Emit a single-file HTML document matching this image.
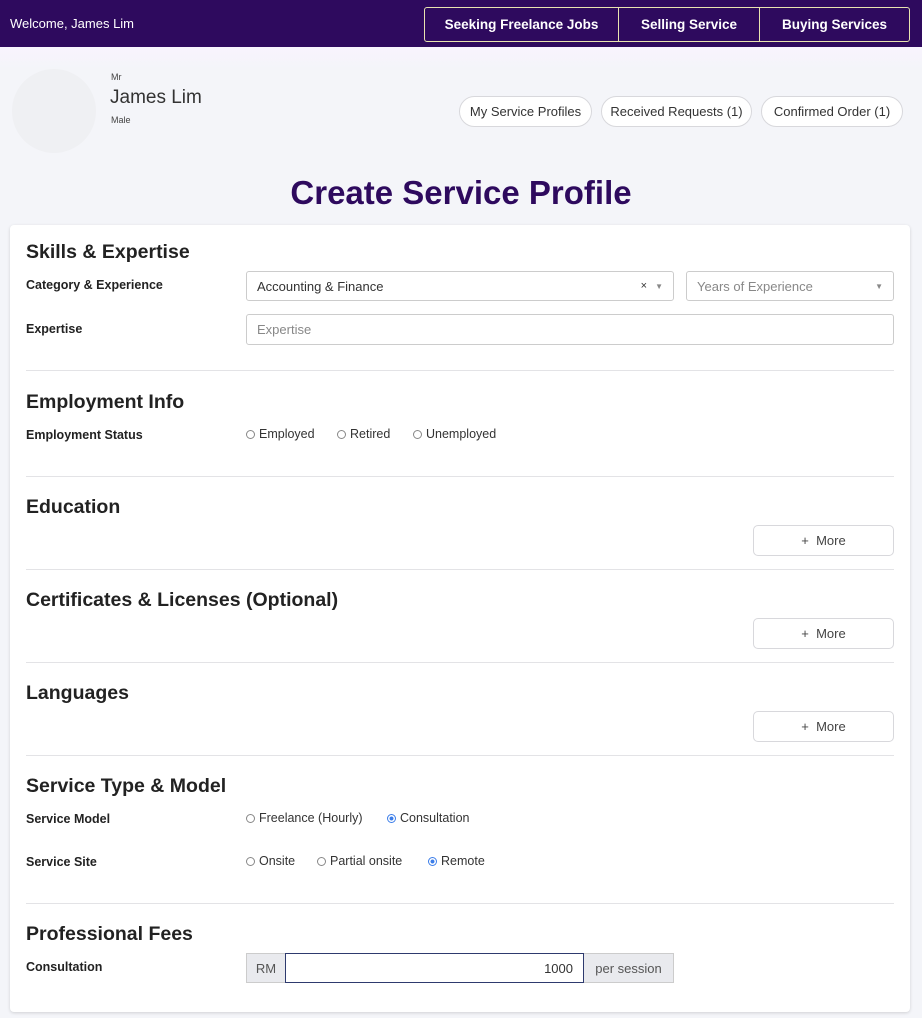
<!DOCTYPE html>
<html><head><meta charset="utf-8"><style>
*{box-sizing:border-box;margin:0;padding:0}
body{width:922px;height:1018px;background:#f4f5f9;font-family:"Liberation Sans",sans-serif;color:#222;position:relative;overflow:hidden;font-size:13px}
.a{position:absolute}
.hdr{left:0;top:0;width:922px;height:47px;background:#2e0a5e}
.band{left:0;top:47px;width:922px;height:22px;background:linear-gradient(#f8f4fe,#f4f5f9)}
.nav{left:424px;top:7px;width:486px;height:35px;border:1px solid #e8e3b0;border-radius:3px;display:flex;color:#fff;font-weight:bold;font-size:13.5px}
.nav div{display:flex;align-items:center;justify-content:center;border-right:1px solid #e8e3b0}
.nav div:last-child{border-right:none}
.pill{top:96px;height:31px;border:1px solid #d8d8dc;border-radius:16px;background:#fff;display:flex;align-items:center;justify-content:center;font-size:13px;color:#333}
.card{left:10px;top:225px;width:900px;height:787px;background:#fff;border-radius:4px;box-shadow:0 1px 3px rgba(0,0,0,.15)}
h2{position:absolute;left:26px;font-size:19.5px;font-weight:bold;color:#222}
.lbl{position:absolute;left:26px;font-size:12.5px;font-weight:bold;color:#222}
.hr{position:absolute;left:26px;width:868px;height:1px;background:#e3e3e6}
.inp{position:absolute;border:1px solid #ccc;border-radius:3px;background:#fff;font-size:13px;padding-left:10px;display:flex;align-items:center}
.more{position:absolute;left:753px;width:141px;height:31px;border:1px solid #d8d8dc;border-radius:5px;display:flex;align-items:center;justify-content:center;font-size:13px;color:#444}
.r{position:absolute;font-size:12.5px;color:#333;display:flex;align-items:center}
.r i{display:inline-block;width:9px;height:9px;border:1px solid #888;border-radius:50%;margin-right:4px}
.r i.on{border:1px solid #3b7de9;background:radial-gradient(#3b7de9 35%,#fff 45%)}
</style></head><body>
<div class="a hdr"></div>
<div class="a" style="left:10px;top:16px;color:#fff;font-size:13px">Welcome, James Lim</div>
<div class="a nav"><div style="width:194px">Seeking Freelance Jobs</div><div style="width:141px">Selling Service</div><div style="flex:1">Buying Services</div></div>
<div class="a band"></div>
<div class="a" style="left:12px;top:69px;width:84px;height:84px;border-radius:50%;background:#eff0f3"></div>
<div class="a" style="left:111px;top:72px;font-size:9px;color:#444">Mr</div>
<div class="a" style="left:110px;top:87px;font-size:19px;color:#333">James Lim</div>
<div class="a" style="left:111px;top:115px;font-size:9px;color:#444">Male</div>
<div class="a pill" style="left:459px;width:133px">My Service Profiles</div>
<div class="a pill" style="left:601px;width:151px">Received Requests (1)</div>
<div class="a pill" style="left:761px;width:142px">Confirmed Order (1)</div>
<div class="a" style="left:0;width:922px;top:174px;text-align:center;font-size:33px;font-weight:bold;color:#2e0a5e">Create Service Profile</div>
<div class="a card"></div>
<h2 style="top:241px">Skills &amp; Expertise</h2>
<div class="lbl" style="top:278px">Category &amp; Experience</div>
<div class="inp" style="left:246px;top:271px;width:428px;height:30px;color:#333">Accounting &amp; Finance<span style="position:absolute;right:26px;font-size:11px">×</span><span style="position:absolute;right:10px;font-size:8px;color:#888">▼</span></div>
<div class="inp" style="left:686px;top:271px;width:208px;height:30px;color:#888">Years of Experience<span style="position:absolute;right:10px;font-size:8px;color:#888">▼</span></div>
<div class="lbl" style="top:322px">Expertise</div>
<div class="inp" style="left:246px;top:314px;width:648px;height:31px;color:#888">Expertise</div>
<div class="hr" style="top:370px"></div>
<h2 style="top:391px">Employment Info</h2>
<div class="lbl" style="top:428px">Employment Status</div>
<div class="r" style="left:246px;top:427px"><i></i>Employed</div>
<div class="r" style="left:337px;top:427px"><i></i>Retired</div>
<div class="r" style="left:413px;top:427px"><i></i>Unemployed</div>
<div class="hr" style="top:476px"></div>
<h2 style="top:496px">Education</h2>
<div class="more" style="top:525px">+&nbsp; More</div>
<div class="hr" style="top:569px"></div>
<h2 style="top:589px">Certificates &amp; Licenses (Optional)</h2>
<div class="more" style="top:618px">+&nbsp; More</div>
<div class="hr" style="top:662px"></div>
<h2 style="top:682px">Languages</h2>
<div class="more" style="top:711px">+&nbsp; More</div>
<div class="hr" style="top:755px"></div>
<h2 style="top:775px">Service Type &amp; Model</h2>
<div class="lbl" style="top:812px">Service Model</div>
<div class="r" style="left:246px;top:811px"><i></i>Freelance (Hourly)</div>
<div class="r" style="left:387px;top:811px"><i class="on"></i>Consultation</div>
<div class="lbl" style="top:855px">Service Site</div>
<div class="r" style="left:246px;top:854px"><i></i>Onsite</div>
<div class="r" style="left:317px;top:854px"><i></i>Partial onsite</div>
<div class="r" style="left:428px;top:854px"><i class="on"></i>Remote</div>
<div class="hr" style="top:903px"></div>
<h2 style="top:923px">Professional Fees</h2>
<div class="lbl" style="top:960px">Consultation</div>
<div class="a" style="left:246px;top:953px;width:40px;height:30px;background:#e9eaee;border:1px solid #ccc;display:flex;align-items:center;justify-content:center;color:#555">RM</div>
<div class="a" style="left:285px;top:953px;width:299px;height:30px;border:1px solid #2e3a6e;background:#fff;display:flex;align-items:center;justify-content:flex-end;padding-right:10px;color:#333">1000</div>
<div class="a" style="left:584px;top:953px;width:90px;height:30px;background:#e9eaee;border:1px solid #ccc;border-left:none;display:flex;align-items:center;justify-content:center;color:#555">per session</div>
</body></html>
